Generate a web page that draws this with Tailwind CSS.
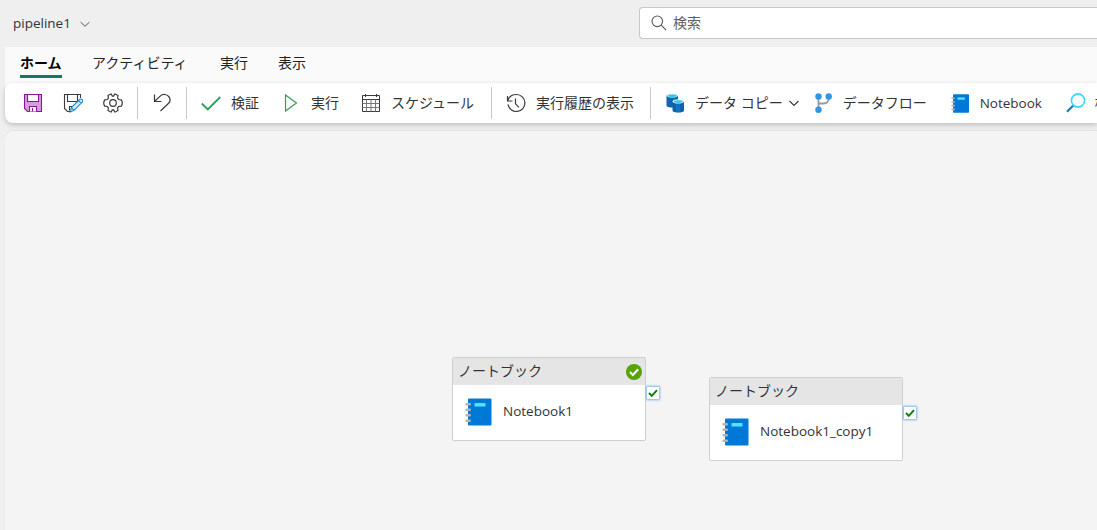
<!DOCTYPE html>
<html lang="ja">
  <head>
    <meta charset="UTF-8" />
    <meta name="viewport" content="width=device-width, initial-scale=1.0" />
    <title>pipeline1</title>
    <script src="https://cdn.jsdelivr.net/npm/@tailwindcss/browser@4"></script>
  </head>
  <body
    class="h-screen overflow-hidden bg-[#efefef] font-['Open_Sans','Noto_Sans_CJK_JP',sans-serif] text-[14px] text-[#333]"
  >
    <!-- Shared icons -->
    <svg class="hidden">
      <symbol id="notebook" viewBox="0 0 28 28">
        <path d="M4 .5h21.500q1 0 1 1v25q0 1-1 1H4q-1 0-1-1v-25q0-1 1-1z" fill="#0078d7" />
        <path d="M9.500 5h11v3.500h-11z" fill="#50e6ff" />
        <path d="M1.600 6.200h3.200M1.600 11.700h3.200M1.600 17.200h3.200M1.600 22.700h3.200" stroke="#b3b3b3" stroke-width="2.400" stroke-linecap="round" />
      </symbol>
      <symbol id="check" viewBox="0 0 10 10">
        <path d="M1 5l2.800 2.900L9 2.200" fill="none" stroke="#107c10" stroke-width="2" />
      </symbol>
    </svg>

    <div class="flex h-full flex-col">
      <!-- Header -->
      <header class="flex h-[47px] shrink-0 items-center pl-[13px]">
        <div class="flex w-[626px] items-center">
          <span class="w-[58px] text-[13.500px] whitespace-nowrap">pipeline1</span>
          <svg class="ml-[8px] size-3" viewBox="0 0 12 12" fill="none" stroke="#555">
            <path d="M1.700 4.200L6 8.300l4.300-4.100" />
          </svg>
        </div>
        <div class="mb-px flex h-8 flex-1 items-center rounded-l border border-r-0 border-[#c8c8c8] bg-white pl-[11px] text-[#616161]">
          <svg class="size-4" viewBox="0 0 16 16" fill="none" stroke="#555" stroke-width="1.100">
            <circle cx="6.300" cy="6.300" r="5.300" />
            <path d="M10.200 10.200l4.900 4.900" />
          </svg>
          <span class="mb-0.5 ml-[6px]">検索</span>
        </div>
      </header>

      <div class="ml-[5px] flex min-h-0 flex-1 flex-col">
        <!-- Tabs -->
        <nav class="flex h-9 shrink-0 bg-[#fafafa] pl-[15px] leading-[31px] text-[#222]">
          <span class="h-[31px] w-[42px] border-b-3 border-[#117865] font-bold text-black whitespace-nowrap">ホーム</span>
          <span class="ml-[30px] w-[98px] whitespace-nowrap">アクティビティ</span>
          <span class="ml-[30px] w-7">実行</span>
          <span class="ml-[30px] w-7">表示</span>
        </nav>

        <!-- Toolbar -->
        <div class="bg-gradient-to-b from-[#fafafa] from-50% to-[#efefef] to-50%">
          <div class="flex h-10 items-center rounded-l-lg bg-white pl-[18px] whitespace-nowrap shadow-[0_2px_5px_rgba(0,0,0,0.2)]">
            <svg class="size-5 shrink-0" viewBox="0 0 20 20" fill="none" stroke="#881798" stroke-width="1.100">
              <path d="M1.500 1.500h17v17h-14l-3-3z" fill="#d59ddd" />
              <path d="M4.500 1.500h11v7h-11zM6.500 18.500v-5h7v5" fill="#fafafa" />
              <path d="M9.500 15v3.500" />
            </svg>
            <svg class="ml-5 size-5 shrink-0" viewBox="0 0 20 20" fill="none" stroke="#3a3a3a" stroke-width="1.100">
              <path d="M17.500 5V1.500h-16v14l3 3H7M4.500 1.500v7h10v-7M6.500 17.500v-4H10" />
              <path d="M7.200 19l1.200-4.400 8.200-8.100q1.500-1 2.600 0 1 1.200 0 2.600L11 17.400zM8.500 14.500l2.500 2.900M15.500 7.600l2.700 2.700" fill="#d5ecfa" stroke="#1e8bcd" />
            </svg>
            <svg class="ml-5 size-5 shrink-0" viewBox="0 0 20 20" fill="none" stroke="#3a3a3a" stroke-width="1.200">
              <path d="M7.600 1h.7l1 2.100h1.400l1-2.100h.7l2.600 1.500-.4 2.500 1 1.500 2.700.4.900 2v2.200l-.9 2-2.700.4-1 1.500.4 2.500-2.600 1.500h-.7l-1-2.100H9.300l-1 2.100h-.7L5 17.500l.4-2.500-1-1.500-2.700-.4-.9-2V8.900l.9-2 2.700-.4 1-1.500L5 2.500z" />
              <circle cx="10" cy="10" r="3.300" />
            </svg>
            <span class="ml-[14px] h-8 w-px shrink-0 bg-[#c8c8c8]"></span>
            <svg class="ml-[14px] size-5 shrink-0" viewBox="0 0 20 20" fill="none" stroke="#3a3a3a" stroke-width="1.200">
              <path d="M2.500 1.500v7h7M2.700 8.300l5.500-5.200c3-2.600 6.700-1.800 8.500.4 2 2.400 1.500 5.300-.6 7.300L8.500 18" />
            </svg>
            <span class="ml-[14px] h-8 w-px shrink-0 bg-[#c8c8c8]"></span>

            <svg class="ml-[14px] size-5 shrink-0" viewBox="0 0 20 20" fill="none" stroke="#24a45c" stroke-width="1.800">
              <path d="M.8 10.500l6 6L19.300 4" />
            </svg>
            <span class="mb-0.5 ml-[10px] w-7">検証</span>
            <svg class="ml-[22px] size-5 shrink-0" viewBox="0 0 20 20" fill="#f7f7f7" stroke="#3a9f55" stroke-width="1.200">
              <path d="M4.500 2v16L15.500 10z" />
            </svg>
            <span class="mb-0.5 ml-[10px] w-7">実行</span>
            <svg class="ml-[22px] size-5 shrink-0" viewBox="0 0 20 20" fill="none" stroke="#3a3a3a">
              <path d="M1.500 2.500h17v16h-17zM1.500 6.500h17M4.500 1v3M15.500 1v3" />
              <path d="M1.500 10.500h17M1.500 14.500h17M5.500 6.500v12M10 6.500v12M14.500 6.500v12" stroke="#777" />
            </svg>
            <span class="mb-0.5 ml-[10px] w-[84px]">スケジュール</span>
            <span class="ml-[17px] h-8 w-px shrink-0 bg-[#c8c8c8]"></span>

            <svg class="ml-[14px] size-5 shrink-0" viewBox="0 0 20 20" fill="none" stroke="#3a3a3a" stroke-width="1.200">
              <path d="M1.500 3v5h5M1.700 7.500C3 3.800 6.500 1.500 10.500 1.500a8.500 8.500 0 1 1-8.500 9.800M9.500 5.500v5.300l3.500 3.500" />
            </svg>
            <span class="mb-0.5 ml-[10px] w-[98px]">実行履歴の表示</span>
            <span class="ml-4 h-8 w-px shrink-0 bg-[#c8c8c8]"></span>

            <svg class="ml-[14px] size-5 shrink-0" viewBox="0 0 20 20">
              <path d="M1.500 2.300v10.200c0 2.700 11.500 2.700 11.500 0V2.300z" fill="#0f66b0" />
              <ellipse cx="7.250" cy="2.500" rx="5.750" ry="2.100" fill="#d8f2f8" />
              <ellipse cx="7.250" cy="2.700" rx="4.500" ry="1.300" fill="#37c5e5" />
              <path d="M7.500 8.500v9c0 2.700 11.500 2.700 11.500 0v-9z" fill="#0d62ad" />
              <path d="M11 9v10h4V9z" fill="#1471c4" />
              <ellipse cx="13.250" cy="8.400" rx="5.750" ry="2.200" fill="#d8f2f8" />
              <ellipse cx="13.250" cy="8.600" rx="4.500" ry="1.400" fill="#37c5e5" />
            </svg>
            <span class="mb-0.5 ml-[10px] w-[88px]">データ コピー</span>
            <svg class="ml-[5px] size-3 shrink-0" viewBox="0 0 12 12" fill="none" stroke="#3a3a3a" stroke-width="1.200">
              <path d="M1.500 4L6 8.500 10.500 4" />
            </svg>
            <svg class="ml-[13px] size-5 shrink-0" viewBox="0 0 20 20">
              <path d="M5.500 4v12M5.500 10.500h5q5 0 5.500-6" fill="none" stroke="#999" stroke-width="1.800" />
              <circle cx="5.500" cy="3.500" r="3.200" fill="#2e96e3" />
              <circle cx="15.700" cy="3.500" r="3.200" fill="#2e96e3" />
              <circle cx="5.500" cy="16.700" r="3.200" fill="#2e96e3" />
            </svg>
            <span class="mb-0.5 ml-[10px] w-[84px]">データフロー</span>
            <svg class="ml-6 size-[19px] shrink-0"><use href="#notebook" /></svg>
            <span class="ml-[10px] w-[62px] text-[13.500px]">Notebook</span>
            <svg class="ml-6 size-5 shrink-0" viewBox="0 0 20 20" fill="none">
              <path d="M1 18.800l6.500-6.600" stroke="#1d80b8" stroke-width="2.300" />
              <circle cx="12" cy="7.500" r="6.600" fill="#f5fdff" stroke="#3bd8f5" stroke-width="1.600" />
            </svg>
            <span class="mb-0.5 ml-[9px]">検索</span>
          </div>
        </div>

        <!-- Canvas -->
        <main class="relative mt-[7px] flex-1 rounded-tl-lg border-t border-[#e2e2e2] bg-[#f4f4f4]">
          <div class="absolute top-[226px] left-[447px] h-[84px] w-[194px] rounded-xs border border-[#cfcfcf] bg-white">
            <div class="flex h-[27px] items-center justify-between bg-[#e5e5e5] pr-[3px] pl-[5px]">
              <span class="mb-0.5">ノートブック</span>
              <svg class="size-4" viewBox="0 0 16 16" fill="none">
                <circle cx="8" cy="8" r="8" fill="#57a300" />
                <path d="M4 8l2.900 2.900L12.200 5.200" stroke="#fff" stroke-width="2.100" />
              </svg>
            </div>
            <div class="flex h-[53px] items-center pl-3">
              <svg class="size-7"><use href="#notebook" /></svg>
              <span class="ml-[10px] text-[13.500px]">Notebook1</span>
            </div>
            <div class="absolute top-[29px] left-[194px] flex size-3 items-center justify-center bg-white shadow-[0_0_2px_1px_#75b5e8]">
              <svg class="size-[10px]"><use href="#check" /></svg>
            </div>
          </div>

          <div class="absolute top-[246px] left-[704px] h-[84px] w-[194px] rounded-xs border border-[#cfcfcf] bg-white">
            <div class="flex h-[27px] items-center bg-[#e5e5e5] pl-[5px]">
              <span class="mb-0.5">ノートブック</span>
            </div>
            <div class="flex h-[53px] items-center pl-3">
              <svg class="size-7"><use href="#notebook" /></svg>
              <span class="ml-[10px] text-[13.500px]">Notebook1_copy1</span>
            </div>
            <div class="absolute top-[29px] left-[194px] flex size-3 items-center justify-center bg-white shadow-[0_0_2px_1px_#75b5e8]">
              <svg class="size-[10px]"><use href="#check" /></svg>
            </div>
          </div>
        </main>
      </div>
    </div>
  </body>
</html>
